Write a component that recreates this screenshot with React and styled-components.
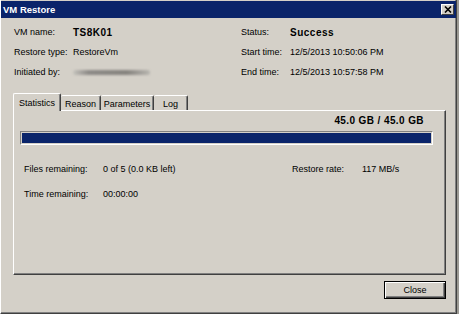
import React from "react";
import styled, { createGlobalStyle } from "styled-components";

const GlobalStyle = createGlobalStyle`
  * {
    margin: 0;
    padding: 0;
    box-sizing: border-box;
  }

  body {
    margin: 0;
    background-color: #9c9a94;
    font-family: "Liberation Sans", Arial, sans-serif;
    font-size: 9px;
    color: #000;
  }
`;

const Window = styled.div`
  width: 457px;
  height: 314px;
  display: flex;
  flex-direction: column;
  background-color: #d4d0c8;
  border-left: 1px solid #ffffff;
  border-right: 1px solid #404040;
  border-bottom: 1px solid #404040;
  box-shadow: inset -1px -1px 0 #808080;
`;

const TitleBar = styled.div`
  height: 17px;
  margin-top: 1px;
  display: flex;
  align-items: center;
  justify-content: space-between;
  padding: 0 2px 0 2px;
  background-color: #0a246a;
  color: #ffffff;
  font-weight: 700;
  font-size: 9.5px;
`;

const CloseBox = styled.div`
  width: 13px;
  height: 11px;
  display: flex;
  align-items: center;
  justify-content: center;
  background-color: #d4d0c8;
  border-top: 1px solid #ffffff;
  border-left: 1px solid #ffffff;
  border-right: 1px solid #404040;
  border-bottom: 1px solid #404040;
`;

const Content = styled.div`
  flex: 1;
  display: flex;
  flex-direction: column;
  padding: 4px 10px 0 12px;
`;

const InfoGrid = styled.div`
  display: grid;
  grid-template-columns: 59px 168px 49px 1fr;
  grid-auto-rows: 20px;
  align-items: center;
  margin-left: 1px;
`;

const Label = styled.span`
  white-space: nowrap;
`;

const Value = styled.span`
  white-space: nowrap;
  font-weight: ${(p) => (p.$bold ? 700 : 400)};
  font-size: ${(p) => (p.$bold ? "10px" : "9px")};
  letter-spacing: ${(p) => (p.$bold ? "0.5px" : "0")};
`;

const Blurred = styled.div`
  width: 77px;
  height: 5px;
  border-radius: 3px;
  background: linear-gradient(90deg, #c4c2bc, #8e8c88 20%, #86847f 70%, #b8b6b0);
  filter: blur(1.2px);
`;

const TabStrip = styled.div`
  display: flex;
  align-items: flex-end;
  height: 17px;
  margin-top: 11px;
  position: relative;
  z-index: 1;
`;

const Tab = styled.div`
  width: ${(p) => p.$w}px;
  height: ${(p) => (p.$active ? 18 : 15)}px;
  margin-bottom: ${(p) => (p.$active ? -1 : 0)}px;
  display: flex;
  align-items: center;
  justify-content: center;
  padding-top: ${(p) => (p.$active ? 0 : 1)}px;
  background-color: #d4d0c8;
  border-top: 1px solid #ffffff;
  border-left: ${(p) => (p.$first || p.$active ? "1px solid #ffffff" : "none")};
  border-right: 1px solid #404040;
  box-shadow: inset -1px 0 0 #808080;
  border-radius: 2px 2px 0 0;
  white-space: nowrap;
`;

const Panel = styled.div`
  width: 433px;
  height: 165px;
  display: flex;
  flex-direction: column;
  padding: 4px 12px 0 6px;
  border-top: 1px solid #ffffff;
  border-left: 1px solid #ffffff;
  border-right: 1px solid #404040;
  border-bottom: 1px solid #404040;
  box-shadow: inset -1px -1px 0 #808080;
`;

const SizeText = styled.div`
  text-align: right;
  padding-right: 9px;
  height: 12px;
  line-height: 12px;
  font-weight: 700;
  font-size: 10px;
  letter-spacing: 0.4px;
`;

const Progress = styled.div`
  margin-top: 4px;
  height: 14px;
  padding: 1px;
  border-top: 1px solid #808080;
  border-left: 1px solid #808080;
  border-right: 1px solid #ffffff;
  border-bottom: 1px solid #ffffff;
`;

const Fill = styled.div`
  height: 100%;
  background-color: #0a246a;
`;

const StatsGrid = styled.div`
  display: grid;
  grid-template-columns: 79px 189px 70px 1fr;
  grid-auto-rows: 14px;
  row-gap: 11px;
  align-items: center;
  margin: 17px 0 0 4px;
`;

const Footer = styled.div`
  display: flex;
  justify-content: flex-end;
  margin-top: 6px;
`;

const Button = styled.button`
  width: 62px;
  height: 18px;
  font-family: "Liberation Sans", Arial, sans-serif;
  font-size: 9px;
  color: #000;
  background-color: #d4d0c8;
  border: 1px solid #000000;
  box-shadow: inset 1px 1px 0 #ffffff, inset -1px -1px 0 #404040,
    inset -2px -2px 0 #808080;
  cursor: pointer;
`;

const tabs = [
  { name: "Statistics", w: 48 },
  { name: "Reason", w: 40 },
  { name: "Parameters", w: 53 },
  { name: "Log", w: 34 },
];

const App = () => {
  return (
    <>
      <GlobalStyle />
      <Window>
        <TitleBar>
          <span>VM Restore</span>
          <CloseBox>
            <svg width="8" height="7" viewBox="0 0 8 7">
              <path d="M1 0.5 L7 6.5 M7 0.5 L1 6.5" stroke="#000" strokeWidth="1.6" />
            </svg>
          </CloseBox>
        </TitleBar>

        <Content>
          <InfoGrid>
            <Label>VM name:</Label>
            <Value $bold>TS8K01</Value>
            <Label>Status:</Label>
            <Value $bold>Success</Value>

            <Label>Restore type:</Label>
            <Value>RestoreVm</Value>
            <Label>Start time:</Label>
            <Value>12/5/2013 10:50:06 PM</Value>

            <Label>Initiated by:</Label>
            <Blurred />
            <Label>End time:</Label>
            <Value>12/5/2013 10:57:58 PM</Value>
          </InfoGrid>

          <TabStrip>
            {tabs.map((t, i) => (
              <Tab key={t.name} $w={t.w} $active={i === 0} $first={i === 0}>
                {t.name}
              </Tab>
            ))}
          </TabStrip>

          <Panel>
            <SizeText>45.0 GB / 45.0 GB</SizeText>
            <Progress>
              <Fill style={{ width: "100%" }} />
            </Progress>
            <StatsGrid>
              <Label>Files remaining:</Label>
              <Value>0 of 5 (0.0 KB left)</Value>
              <Label>Restore rate:</Label>
              <Value>117 MB/s</Value>

              <Label>Time remaining:</Label>
              <Value>00:00:00</Value>
            </StatsGrid>
          </Panel>

          <Footer>
            <Button>Close</Button>
          </Footer>
        </Content>
      </Window>
    </>
  );
};

export default App;
